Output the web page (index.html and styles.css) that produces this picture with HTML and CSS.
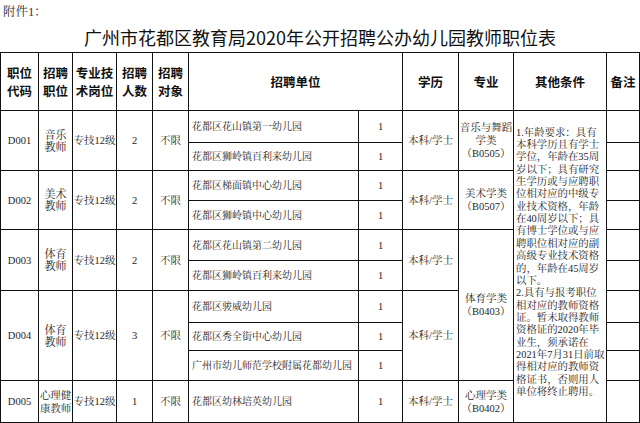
FILE: index.html
```html
<!DOCTYPE html>
<html lang="zh-CN">
<head>
<meta charset="utf-8">
<title>职位表</title>
<link rel="stylesheet" href="styles.css">
</head>
<body>
<div class="attach">附件1：</div>
<h1 class="title">广州市花都区教育局2020年公开招聘公办幼儿园教师职位表</h1>
<table class="jobs">
  <colgroup>
    <col class="c-code"><col class="c-post"><col class="c-level"><col class="c-num"><col class="c-target">
    <col class="c-unit"><col class="c-count"><col class="c-edu"><col class="c-major"><col class="c-other"><col class="c-note">
  </colgroup>
  <thead>
    <tr class="h-head">
      <th>职位<br>代码</th><th>招聘<br>职位</th><th>专业技<br>术岗位</th><th>招聘<br>人数</th><th>招聘<br>对象</th>
      <th colspan="2">招聘单位</th><th>学历</th><th>专业</th><th>其他条件</th><th>备注</th>
    </tr>
  </thead>
  <tbody>
    <tr class="h32">
      <td rowspan="2">D001</td><td rowspan="2" class="post">音乐<br>教师</td><td rowspan="2">专技12级</td><td rowspan="2">2</td><td rowspan="2">不限</td>
      <td class="unit">花都区花山镇第一幼儿园</td><td>1</td>
      <td rowspan="2">本科/学士</td><td rowspan="2" class="major">音乐与舞蹈<br>学类<br>（B0505）</td>
      <td rowspan="10" class="other">1.年龄要求：具有<br>本科学历且有学士<br>学位，年龄在35周<br>岁以下；具有研究<br>生学历或与应聘职<br>位相对应的中级专<br>业技术资格，年龄<br>在40周岁以下；具<br>有博士学位或与应<br>聘职位相对应的副<br>高级专业技术资格<br>的，年龄在45周岁<br>以下。<br>2.具有与报考职位<br>相对应的教师资格<br>证。暂未取得教师<br>资格证的2020年毕<br>业生，须承诺在<br>2021年7月31日前取<br>得相对应的教师资<br>格证书，否则用人<br>单位将终止聘用。</td>
      <td></td>
    </tr>
    <tr class="h28">
      <td class="unit">花都区狮岭镇百利来幼儿园</td><td>1</td><td></td>
    </tr>
    <tr class="h30">
      <td rowspan="2">D002</td><td rowspan="2" class="post">美术<br>教师</td><td rowspan="2">专技12级</td><td rowspan="2">2</td><td rowspan="2">不限</td>
      <td class="unit">花都区梯面镇中心幼儿园</td><td>1</td>
      <td rowspan="2">本科/学士</td><td rowspan="2" class="major">美术学类<br>（B0507）</td>
      <td></td>
    </tr>
    <tr class="h29">
      <td class="unit">花都区狮岭镇中心幼儿园</td><td>1</td><td></td>
    </tr>
    <tr class="h31">
      <td rowspan="2">D003</td><td rowspan="2" class="post">体育<br>教师</td><td rowspan="2">专技12级</td><td rowspan="2">2</td><td rowspan="2">不限</td>
      <td class="unit">花都区花山镇第二幼儿园</td><td>1</td>
      <td rowspan="2">本科/学士</td><td rowspan="5" class="major">体育学类<br>（B0403）</td>
      <td></td>
    </tr>
    <tr class="h30">
      <td class="unit">花都区狮岭镇百利来幼儿园</td><td>1</td><td></td>
    </tr>
    <tr class="h32">
      <td rowspan="3">D004</td><td rowspan="3" class="post">体育<br>教师</td><td rowspan="3">专技12级</td><td rowspan="3">3</td><td rowspan="3">不限</td>
      <td class="unit">花都区骏威幼儿园</td><td>1</td>
      <td rowspan="3">本科/学士</td>
      <td></td>
    </tr>
    <tr class="h28">
      <td class="unit">花都区秀全街中心幼儿园</td><td>1</td><td></td>
    </tr>
    <tr class="h30">
      <td class="unit">广州市幼儿师范学校附属花都幼儿园</td><td>1</td><td></td>
    </tr>
    <tr class="h42">
      <td>D005</td><td class="post tight">心理健<br>康教师</td><td>专技12级</td><td>1</td><td>不限</td>
      <td class="unit">花都区幼林培英幼儿园</td><td>1</td>
      <td>本科/学士</td><td class="major">心理学类<br>（B0402）</td>
      <td></td>
    </tr>
  </tbody>
</table>
</body>
</html>
```

FILE: styles.css
```css
html, body {
  margin: 0;
  padding: 0;
  background: #fff;
}
body {
  width: 640px;
  height: 423px;
  overflow: hidden;
  font-family: "Liberation Serif", "Noto Serif CJK SC", "Noto Sans CJK SC", serif;
  color: #1e1e1e;
}
.attach {
  height: 25px;
  line-height: 25px;
  padding-left: 3px;
  font-size: 12.5px;
  color: #333;
}
.title {
  margin: 0;
  height: 27px;
  line-height: 25px;
  text-align: center;
  font-family: "Noto Sans CJK SC", sans-serif;
  font-weight: normal;
  font-size: 18px;
  color: #111;
}
.jobs {
  border-collapse: collapse;
  table-layout: fixed;
  width: 639px;
}
.jobs th, .jobs td {
  border: 1px solid #111;
  padding: 0;
  text-align: center;
  vertical-align: middle;
  font-size: 10.5px;
  line-height: 13px;
  overflow: hidden;
  white-space: nowrap;
}
.jobs th {
  font-family: "Noto Sans CJK SC", sans-serif;
  font-weight: bold;
  font-size: 12.5px;
  line-height: 18px;
  color: #111;
}
.c-code { width: 38px; }
.c-post { width: 34px; }
.c-level { width: 44px; }
.c-num { width: 36px; }
.c-target { width: 36px; }
.c-unit { width: 170px; }
.c-count { width: 44px; }
.c-edu { width: 56px; }
.c-major { width: 55px; }
.c-other { width: 93px; }
.c-note { width: 33px; }

.h-head { height: 58px; }
.h28 { height: 28px; }
.h29 { height: 29px; }
.h30 { height: 30px; }
.h31 { height: 31px; }
.h32 { height: 32px; }
.h42 { height: 42px; }

.jobs td.unit {
  text-align: left;
  padding-left: 3px;
  font-size: 10px;
}
.jobs td.post {
  font-size: 11px;
  line-height: 12px;
}
.jobs td.post.tight {
  font-size: 10.5px;
  letter-spacing: -0.2px;
  line-height: 13px;
}
.jobs td.major {
  line-height: 13px;
}
.jobs td.other {
  text-align: left;
  vertical-align: middle;
  padding: 0 0 8px 2px;
  font-size: 10.4px;
  line-height: 12.35px;
}
```
